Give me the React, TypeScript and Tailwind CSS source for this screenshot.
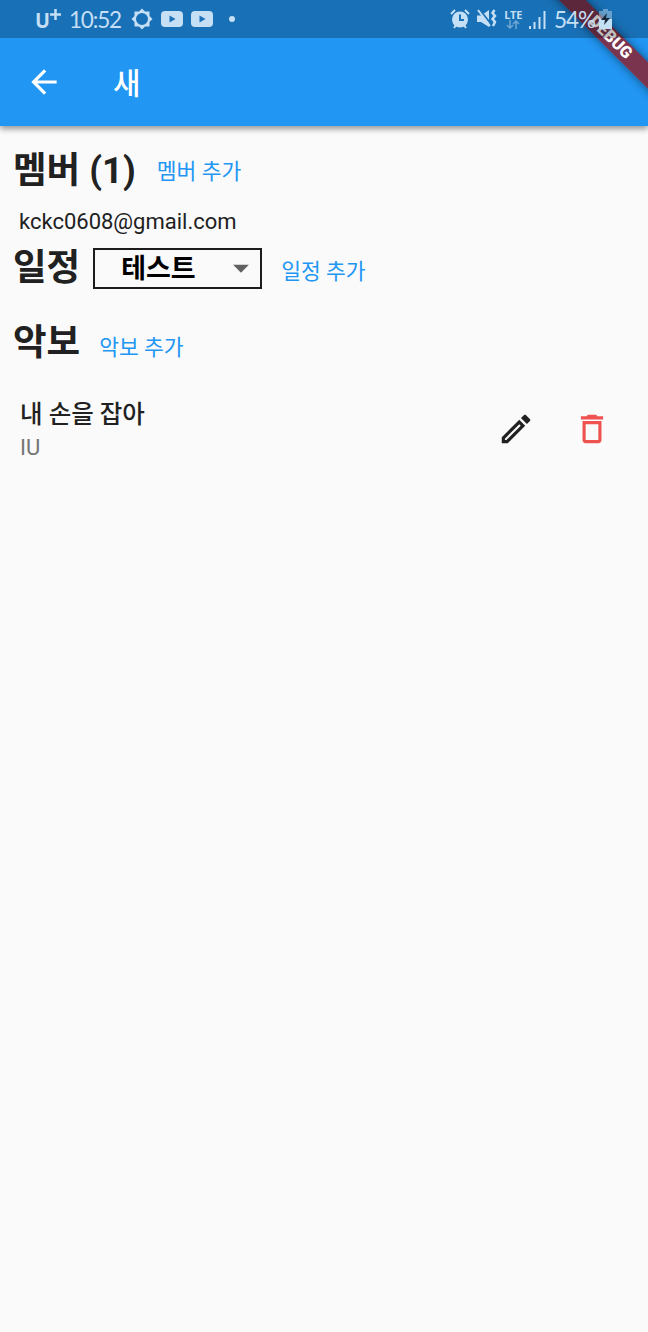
import { MdArrowBack, MdArrowDropDown, MdDeleteOutline, MdOutlineEdit } from 'react-icons/md';
import type { ReactNode } from 'react';

interface SectionHeaderProps {
  title: string;
  action: string;
  className: string;
  actionClassName: string;
  children?: ReactNode;
}

function StatusBar() {
  return (
    <div className="relative z-20 flex h-[38px] items-center bg-black/25 text-[#c5dff5]">
      <div className="flex items-center pl-[35px]">
        <span className="flex w-[34px] whitespace-nowrap font-['Open_Sans'] text-[22px] font-bold leading-none">
          <span className="w-[15px] origin-left scale-x-90">U</span>
          <svg className="mt-px" width="11" height="11" viewBox="0 0 11 11" stroke="currentColor" strokeWidth="2.500">
            <path d="M5.500 0v11M0 5.500h11" />
          </svg>
        </span>
        <span className="w-[62px] whitespace-nowrap pt-0.5 font-['Lato'] text-[22.500px] leading-none tracking-[-1.2px]">10:52</span>
        {/* settings */}
        <svg width="22" height="22" viewBox="0 0 22 22">
          <path
            fill="currentColor"
            fillRule="evenodd"
            d="M11 .5l3 3h4.500V8l3 3-3 3v4.500H14l-3 3-3-3H3.500V14l-3-3 3-3V3.500H8zM11 5a6 6 0 1 0 0 12a6 6 0 1 0 0-12z"
          />
        </svg>
        <YoutubeIcon />
        <YoutubeIcon />
        <span className="ml-4 size-1.5 rounded-full bg-current" />
      </div>
      <div className="ml-auto flex items-center pr-9">
        {/* alarm */}
        <svg width="20" height="20" viewBox="0 0 20 20" fill="none">
          <circle cx="10" cy="10.500" r="8" fill="currentColor" />
          <path d="M1 5l4-4M19 5l-4-4M4 19l2-3M16 19l-2-3" stroke="currentColor" strokeWidth="2" />
          <path d="M10 5.500V11h4" stroke="#1b71b8" strokeWidth="2" />
        </svg>
        {/* vibrate */}
        <svg className="ml-[7px]" width="20" height="20" viewBox="0 0 20 20" fill="none">
          <path d="M0 6.500h4L12 1v17l-8-5H0z" fill="currentColor" />
          <path d="M2 0l12 15" stroke="#1b71b8" strokeWidth="2" />
          <path d="M1 1l12 16" stroke="currentColor" strokeWidth="2" />
          <path d="M17.500 1l-2 3 2.500 3-2.500 3 2.500 3-2 4" stroke="currentColor" strokeWidth="2.500" />
        </svg>
        <div className="ml-[7px] flex flex-col items-center">
          <span className="font-['Open_Sans'] text-[11px] font-bold leading-[11px] tracking-[-0.3px]">LTE</span>
          <svg className="opacity-50" width="14" height="9" viewBox="0 0 14 9" fill="none" stroke="currentColor" strokeWidth="1.500">
            <path d="M4 0v8M1 5l3 3 3-3M10 9V1M7 4l3-3 3 3" />
          </svg>
        </div>
        <svg className="ml-[7px]" width="17" height="19" viewBox="0 0 17 19" fill="currentColor">
          <path d="M0 16h2v3H0zM4.500 12h2v7h-2zM9.500 7h2v12h-2zM14.500 1h2v18h-2z" />
        </svg>
        <span className="ml-2 w-[45px] whitespace-nowrap pt-0.5 font-['Lato'] text-[22.500px] leading-none tracking-[-1px]">54%</span>
        <svg width="13" height="20" viewBox="0 0 13 20">
          <path d="M4 0h5v2H4z" fill="currentColor" opacity=".45" />
          <path d="M0 2h13v8H0z" fill="currentColor" opacity=".45" />
          <path d="M0 10h13v10H0z" fill="currentColor" />
          <path d="M8 4l-6 7h4l-1 5 6-7H7z" fill="#16283a" />
        </svg>
      </div>
    </div>
  );
}

function YoutubeIcon() {
  return (
    <svg className="ml-2" width="22" height="16" viewBox="0 0 22 16">
      <rect width="22" height="16" rx="4" fill="currentColor" />
      <path d="M8.500 4.500v7l6-3.500z" fill="#1b71b8" />
    </svg>
  );
}

function DebugBanner() {
  return (
    <div className="pointer-events-none absolute inset-0 z-10 overflow-hidden">
      <div className="absolute right-0 top-0 h-0 w-0 origin-top-left rotate-45">
        <div className="absolute -left-[95px] top-[44px] flex h-[19px] w-[190px] items-center justify-center bg-[rgba(146,28,36,0.8)] font-['Roboto'] text-[16.500px] font-black leading-none text-white shadow-[0_0_10px_rgba(0,0,0,0.5)]">
          DEBUG
        </div>
      </div>
    </div>
  );
}

function SectionHeader({ title, action, className, actionClassName, children }: SectionHeaderProps) {
  return (
    <div className={`flex items-center pl-[13px] ${className}`}>
      <h2 className="whitespace-nowrap text-[36.500px] font-bold leading-none">{title}</h2>
      {children}
      <button className={`whitespace-nowrap text-[21.500px] leading-none text-[#2196f3] ${actionClassName}`}>
        {action}
      </button>
    </div>
  );
}

export default function App() {
  return (
    <div className="relative h-[1332px] w-[648px] overflow-hidden bg-[#fafafa] font-['Roboto','Noto_Sans_CJK_KR',sans-serif] text-[#212121]">
      <header className="relative h-[126px] bg-[#2196f3] text-white shadow-[0_3px_6px_rgba(0,0,0,0.4)]">
        {/* the banner sits under the translucent status bar */}
        <DebugBanner />
        <StatusBar />
        <div className="flex h-[88px] items-center pl-[25px]">
          <MdArrowBack size={38} />
          <h1 className="ml-[50px] pt-1 text-[30px] font-medium leading-none">새</h1>
        </div>
      </header>

      <main>
        <SectionHeader title="멤버 (1)" action="멤버 추가" className="mt-5 h-[50px]" actionClassName="ml-[21px] mt-px" />
        <p className="ml-[19px] mt-[11px] text-[22px] leading-[30px]">kckc0608@gmail.com</p>
        <SectionHeader title="일정" action="일정 추가" className="mt-[5px] h-[52px]" actionClassName="ml-[19px] mt-2">
          <button className="ml-[13px] flex h-[41px] w-[169px] items-center border-2 border-[#1c1c1c] pl-[26px] pt-[3px] text-black">
            <span className="w-[101px] whitespace-nowrap text-left text-[27px] font-bold leading-none">테스트</span>
            <MdArrowDropDown size={38} className="-mt-[3px] shrink-0 text-[#616161]" />
          </button>
        </SectionHeader>
        <SectionHeader title="악보" action="악보 추가" className="mt-6 h-[50px]" actionClassName="ml-[19px] mt-2.5" />

        <div className="mt-[23px] flex h-[76px] items-center pl-5">
          <div className="pt-[3px]">
            <p className="text-[24.500px] font-medium leading-[35px]">내 손을 잡아</p>
            <p className="text-[22px] leading-[32px] text-[#757575]">IU</p>
          </div>
          <div className="ml-auto flex gap-[38px] pr-[37px]">
            <MdOutlineEdit size={38} />
            <MdDeleteOutline size={38} className="text-[#ef5350]" />
          </div>
        </div>
      </main>
    </div>
  );
}
